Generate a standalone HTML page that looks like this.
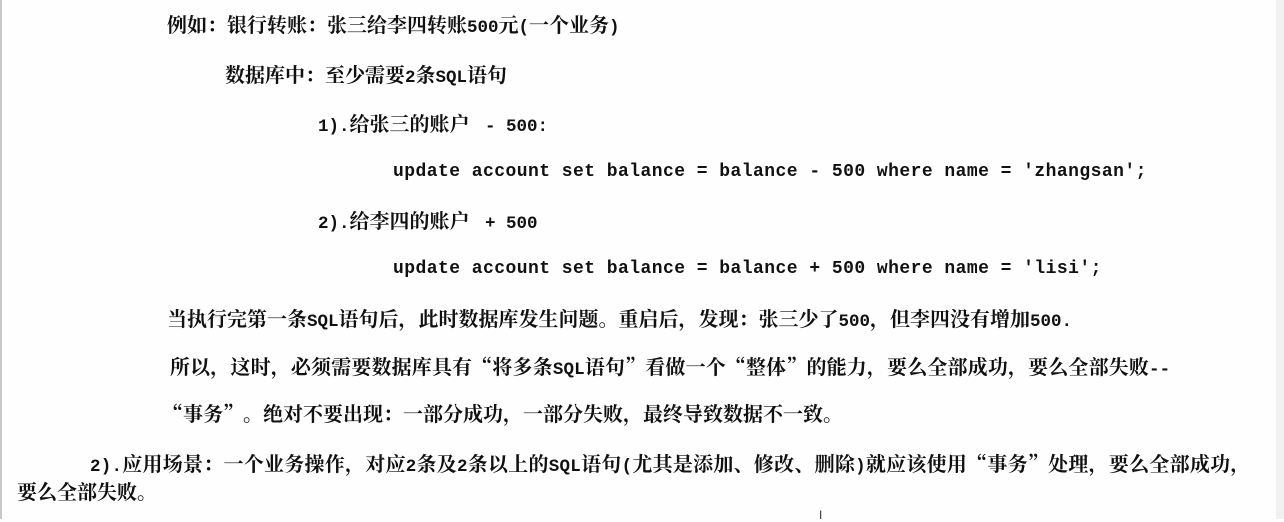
<!DOCTYPE html>
<html><head><meta charset="utf-8"><style>
html,body{margin:0;padding:0}
body{width:1284px;height:519px;background:#fefefe;position:relative;overflow:hidden;font-family:"Noto Serif CJK SC","Liberation Serif",serif;font-size:20px;font-weight:bold;color:#111}
.l{position:absolute;white-space:pre;line-height:24px}
.m{font-family:"Liberation Mono","Noto Serif CJK SC",monospace;font-size:17.5px;font-weight:bold}
.c{font-family:"Liberation Mono","Noto Serif CJK SC",monospace;font-size:18px;font-weight:bold;letter-spacing:0.45px}
</style></head><body>
<div style="position:absolute;left:0;top:0;width:2px;height:519px;background:#c8c8c8"></div>
<div style="position:absolute;right:0;top:0;width:8px;height:519px;background:#f1f1f1"></div>
<div class="l" style="left:167px;top:12px">例如：银行转账：张三给李四转账<span class="m">500</span>元<span class="m">(</span>一个业务<span class="m">)</span></div>
<div class="l" style="left:225px;top:62px">数据库中：至少需要<span class="m">2</span>条<span class="m">SQL</span>语句</div>
<div class="l" style="left:318px;top:111px"><span class="m">1).</span>给张三的账户 <span class="m"> - 500:</span></div>
<div class="l c" style="left:393px;top:160px">update account set balance = balance - 500 where name = 'zhangsan';</div>
<div class="l" style="left:318px;top:208px"><span class="m">2).</span>给李四的账户 <span class="m"> + 500</span></div>
<div class="l c" style="left:393px;top:257px">update account set balance = balance + 500 where name = 'lisi';</div>
<div class="l" style="left:167px;top:306px">当执行完第一条<span class="m">SQL</span>语句后，此时数据库发生问题。重启后，发现：张三少了<span class="m">500</span>，但李四没有增加<span class="m">500.</span></div>
<div class="l" style="left:170px;top:354px;letter-spacing:0.15px">所以，这时，必须需要数据库具有“将多条<span class="m">SQL</span>语句”看做一个“整体”的能力，要么全部成功，要么全部失败<span class="m">--</span></div>
<div class="l" style="left:163px;top:401px">“事务”。绝对不要出现：一部分成功，一部分失败，最终导致数据不一致。</div>
<div class="l" style="left:90px;top:451px;letter-spacing:0.25px"><span class="m">2).</span>应用场景：一个业务操作，对应<span class="m">2</span>条及<span class="m">2</span>条以上的<span class="m">SQL</span>语句<span class="m">(</span>尤其是添加、修改、删除<span class="m">)</span>就应该使用“事务”处理，要么全部成功，</div>
<div class="l" style="left:17px;top:479px">要么全部失败。</div>
<div style="position:absolute;left:819px;top:508px;font:12px 'Liberation Sans',sans-serif;color:#333">I</div>
</body></html>
